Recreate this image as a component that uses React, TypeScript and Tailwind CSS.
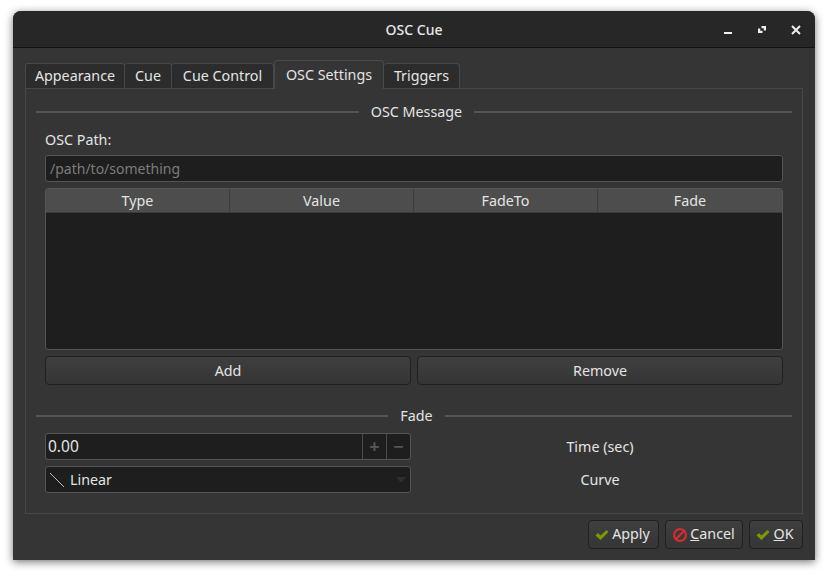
import type { ReactNode } from 'react'

const TABS = [
  { label: 'Appearance', width: 'w-[100px]' },
  { label: 'Cue', width: 'w-[47px]' },
  { label: 'Cue Control', width: 'w-[102px]' },
  { label: 'OSC Settings', width: 'w-[110px]' },
  { label: 'Triggers', width: 'w-[76px]' },
]
const COLUMNS = ['Type', 'Value', 'FadeTo', 'Fade']

function Section({ title }: { title: string }) {
  return (
    <div className="flex items-center gap-3 h-[18px]">
      <div className="flex-[1_1_5px] h-0.5 bg-[#555555]" />
      <span className="pb-[1px]">{title}</span>
      <div className="flex-[1_1_0px] h-0.5 bg-[#555555]" />
    </div>
  )
}

function DialogButton({ children, className }: { children: ReactNode; className: string }) {
  return (
    <button className={`h-[29px] flex items-center justify-center border border-[#202020] rounded-[4px] bg-gradient-to-b from-[#3f3f3f] to-[#353535] ${className}`}>
      {children}
    </button>
  )
}

function CheckIcon() {
  return (
    <svg width="14" height="14" viewBox="0 0 14 14">
      <path d="M0.5 7.5l2.5-2.5 2.5 2.5 6-5.5 2 2-8 8z" fill="#7a9a01" />
    </svg>
  )
}

export default function App() {
  return (
    <div className="w-[828px] h-[576px] bg-white pl-[13px] pt-[11px] font-['Noto_Sans',sans-serif] text-[14.3px] text-[#e4e4e4]">
      <div className="w-[802px] h-[549px] flex flex-col rounded-t-[8px] bg-[#353535] shadow-[0_2px_8px_rgba(0,0,0,0.55)]">
        {/* Title bar */}
        <div className="relative h-[38px] flex items-center justify-center rounded-t-[8px] bg-[#272727] border-b border-[#111111]">
          <span className="font-medium text-[14px] text-[#e8e8e8]">OSC Cue</span>
          <div className="absolute right-[12px] top-[12px] flex items-center gap-[19px]">
            <svg width="16" height="14" viewBox="0 0 16 14">
              <rect x="5" y="9" width="8" height="2" fill="#eeeeee" />
            </svg>
            <svg width="16" height="14" viewBox="0 0 16 14">
              <path d="M7.5 3H12v4.5H9.8V5.2H7.5zM4 5.5h2.2v2.3h2.3V10H4z" fill="#eeeeee" />
            </svg>
            <svg width="14" height="14" viewBox="0 0 14 14">
              <path d="M3 3l8 8M11 3l-8 8" stroke="#eeeeee" strokeWidth="2" />
            </svg>
          </div>
        </div>

        <div className="flex-1 flex flex-col px-3 pb-[11px]">
          {/* Tabs */}
          <div className="flex items-end h-[40px] relative z-10">
            {TABS.map(({ label, width }) => {
              const active = label === 'OSC Settings'
              return active ? (
                <div key={label} className={`${width} h-[29px] -mb-px pt-[3px] flex items-start justify-center border border-b-0 border-[#4a4a4a] rounded-t-[4px] bg-[#353535]`}>
                  {label}
                </div>
              ) : (
                <div key={label} className={`${width} h-[25px] flex items-center justify-center border border-l-0 first:border-l border-b-0 border-[#484848] rounded-t-[3px] bg-[#2c2c2c]`}>
                  {label}
                </div>
              )
            })}
          </div>

          {/* Panel */}
          <div className="h-[426px] flex flex-col border border-[#484848] px-[10px] pt-[14px]">
            <Section title="OSC Message" />

            <div className="px-[9px] flex flex-col">
              <label className="mt-[9px] h-[20px] leading-[20px]">OSC Path:</label>
              <div className="mt-[5px] h-[27px] flex items-center px-[4px] border border-[#555555] rounded-[3px] bg-[#1e1e1e] text-[14px] text-[#7c7c7c]">
                /path/to/something
              </div>

              {/* Table */}
              <div className="mt-[6px] h-[162px] flex flex-col border border-[#555555] rounded-[3px] bg-[#1e1e1e] overflow-hidden">
                <div className="h-[24px] grid grid-cols-4 bg-[#4d4d4d] border-b border-[#3a3a3a]">
                  {COLUMNS.map((col) => (
                    <div key={col} className="flex items-center justify-center border-r last:border-r-0 border-[#3c3c3c]">
                      {col}
                    </div>
                  ))}
                </div>
              </div>

              <div className="mt-[6px] flex gap-[6px]">
                <DialogButton className="flex-1">Add</DialogButton>
                <DialogButton className="flex-1">Remove</DialogButton>
              </div>
            </div>

            <div className="mt-[22px]">
              <Section title="Fade" />
            </div>

            <div className="px-[9px] mt-[8px] grid grid-cols-2 gap-x-[6px] gap-y-[6px]">
              <div className="h-[27px] flex border border-[#555555] rounded-[3px] bg-[#1e1e1e]">
                <span className="flex-1 flex items-center pl-[2px] text-[15.5px]">0.00</span>
                <span className="w-6 flex items-center justify-center border-l border-[#4a4a4a] text-[#555555] text-[18px] font-bold">+</span>
                <span className="w-6 flex items-center justify-center border-l border-[#4a4a4a] text-[#555555] text-[18px] font-bold">−</span>
              </div>
              <div className="flex items-center justify-center">Time (sec)</div>
              <div className="h-[27px] flex items-center border border-[#555555] rounded-[3px] bg-[#1e1e1e]">
                <svg width="16" height="16" viewBox="0 0 16 16" className="ml-[3px]">
                  <path d="M1 1l14 14" stroke="#bdbdbd" strokeWidth="1" />
                </svg>
                <span className="ml-[5px] flex-1">Linear</span>
                <svg width="12" height="8" viewBox="0 0 12 8" className="mr-[3px]">
                  <path d="M1 1h10L6 7z" fill="#2e2e2e" />
                </svg>
              </div>
              <div className="flex items-center justify-center">Curve</div>
            </div>
          </div>

          {/* Dialog buttons */}
          <div className="mt-[6px] flex justify-end gap-[6px]">
            <DialogButton className="w-[71px] gap-[3px] pr-[2px]">
              <CheckIcon />
              <span className="pb-[1px]">Apply</span>
            </DialogButton>
            <DialogButton className="w-[78px] gap-[2px] pr-[1px]">
              <svg width="16" height="16" viewBox="0 0 16 16">
                <circle cx="8" cy="8" r="5.9" fill="none" stroke="#d92b2b" strokeWidth="2.2" />
                <path d="M3.8 12.2l8.4-8.4" stroke="#d92b2b" strokeWidth="2.2" />
              </svg>
              <span className="pb-[1px]"><span className="underline">C</span>ancel</span>
            </DialogButton>
            <DialogButton className="w-[54px] gap-[3px] pr-[2px]">
              <CheckIcon />
              <span className="pb-[1px]"><span className="underline">O</span>K</span>
            </DialogButton>
          </div>
        </div>
      </div>
    </div>
  )
}
